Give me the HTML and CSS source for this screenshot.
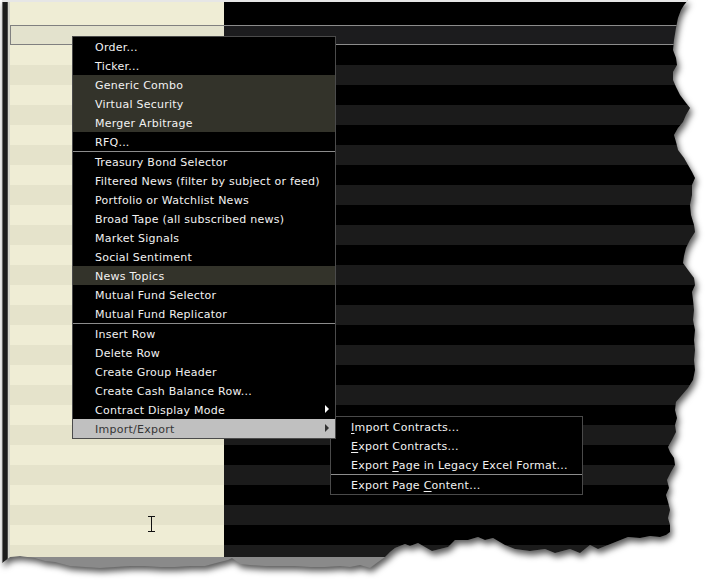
FILE: index.html
```html
<!DOCTYPE html>
<html lang="en">
<head>
    <meta charset="UTF-8">
    <title>Page context menu</title>
    <link rel="stylesheet" href="styles.css">
</head>
<body>
    <div class="screen">
        <div class="paper">
            <div class="sheet">
                <div class="edge"></div>
                <div class="grid">
                    <div class="row row-top"><div class="c1"></div><div class="c2"></div></div>
                    <div class="row row-sel"><div class="c1"></div><div class="c2"></div></div>
                    <div class="row rows"><div class="c1"></div><div class="c2"></div></div>
                </div>
            </div>
        </div>

        <div class="menu">
            <div class="item">Order...</div>
            <div class="item">Ticker...</div>
            <div class="item hl">Generic Combo</div>
            <div class="item hl">Virtual Security</div>
            <div class="item hl">Merger Arbitrage</div>
            <div class="item">RFQ...</div>
            <div class="sep"></div>
            <div class="item">Treasury Bond Selector</div>
            <div class="item">Filtered News (filter by subject or feed)</div>
            <div class="item">Portfolio or Watchlist News</div>
            <div class="item">Broad Tape (all subscribed news)</div>
            <div class="item">Market Signals</div>
            <div class="item">Social Sentiment</div>
            <div class="item hl">News Topics</div>
            <div class="item">Mutual Fund Selector</div>
            <div class="item">Mutual Fund Replicator</div>
            <div class="sep"></div>
            <div class="item">Insert Row</div>
            <div class="item">Delete Row</div>
            <div class="item">Create Group Header</div>
            <div class="item">Create Cash Balance Row...</div>
            <div class="item has-sub">Contract Display Mode</div>
            <div class="item has-sub active">Import/Export</div>
        </div>

        <div class="submenu">
            <div class="item"><u>I</u>mport Contracts...</div>
            <div class="item"><u>E</u>xport Contracts...</div>
            <div class="item">Export <u>P</u>age in Legacy Excel Format...</div>
            <div class="sep"></div>
            <div class="item">Export Page <u>C</u>ontent...</div>
        </div>

        <svg class="cursor" width="8" height="16" viewBox="0 0 8 16">
            <path d="M0 0.5h7M3.5 0v16M0 15.5h7" stroke="#111" stroke-width="1" fill="none"/>
        </svg>
    </div>
</body>
</html>
```

FILE: styles.css
```css
* {
    box-sizing: border-box;
    margin: 0;
    padding: 0;
}

body {
    background: #fff;
    font-family: "DejaVu Sans", Verdana, sans-serif;
    font-size: 11px;
    overflow: hidden;
}

.screen {
    position: relative;
    width: 712px;
    height: 585px;
}

/* torn screenshot paper */
.paper {
    width: 712px;
    height: 585px;
    filter: drop-shadow(2px 4px 3px rgba(0, 0, 0, 0.65));
}

.sheet {
    display: flex;
    align-items: flex-start;
    width: 700px;
    height: 580px;
    padding-left: 2px;
    background: #8a8a8a;
    border-top: 2px solid #e6e6e6;
    clip-path: polygon(
        2px 0, 688px 0, 684px 5px, 681px 10px, 678px 18px, 676px 28px, 674px 40px, 673px 50px,
        676px 58px, 677px 65px, 673px 72px, 673px 80px, 676px 87px, 680px 95px, 686px 103px,
        690px 108px, 686px 115px, 683px 122px, 678px 128px, 674px 135px, 676px 142px, 678px 150px,
        684px 158px, 688px 165px, 692px 172px, 695px 178px, 692px 185px, 692px 195px, 690px 205px,
        691px 215px, 694px 225px, 695px 232px, 690px 240px, 686px 248px, 684px 256px, 683px 263px,
        688px 270px, 694px 278px, 695px 285px, 692px 292px, 693px 300px, 694px 310px, 693px 320px,
        695px 330px, 694px 340px, 695px 350px, 694px 360px, 695px 370px, 693px 380px, 688px 388px,
        682px 395px, 676px 402px, 675px 410px, 677px 418px, 675px 425px, 676px 432px, 672px 440px,
        668px 447px, 670px 452px, 674px 458px, 675px 465px, 671px 472px, 667px 480px, 669px 488px,
        666px 495px, 668px 502px, 670px 510px, 668px 518px, 670px 525px, 670px 532px, 666px 535px,
        660px 537px, 650px 536px, 640px 538px, 628px 537px, 618px 541px, 608px 545px, 598px 549px,
        590px 545px, 580px 553px, 570px 549px, 555px 553px, 545px 549px, 530px 551px, 515px 549px,
        505px 545px, 493px 538px, 485px 540px, 478px 537px, 468px 540px, 455px 540px, 448px 547px,
        440px 549px, 432px 551px, 425px 547px, 418px 543px, 410px 546px, 405px 544px, 395px 548px,
        390px 552px, 385px 557px, 378px 562px, 370px 568px, 360px 565px, 350px 567px, 340px 566px,
        325px 567px, 310px 567px, 295px 566px, 280px 566px, 265px 566px, 250px 565px, 240px 564px,
        232px 558px, 228px 560px, 220px 562px, 205px 566px, 190px 566px, 175px 567px, 160px 567px,
        145px 566px, 130px 566px, 115px 567px, 100px 568px, 85px 567px, 70px 566px, 55px 562px,
        45px 561px, 35px 558px, 20px 556px, 10px 557px, 2px 563px
    );
}

.edge {
    width: 8px;
    height: 561px;
    background: linear-gradient(to right, #6a6a6a 0 1px, #1c1c1c 1px 5px, #4a4a4a 5px 6px, #d6d6cc 6px 8px);
}

.grid {
    display: flex;
    flex-direction: column;
    width: 690px;
    height: 555px;
}

.row {
    display: flex;
}

.c1 {
    width: 214px;
}

.c2 {
    flex: 1;
}

.row-top {
    height: 23px;
}

.row-top .c1 {
    background: #efedd5;
}

.row-top .c2 {
    background: #000;
}

.row-sel {
    height: 20px;
}

.row-sel .c1 {
    background: #e3e2cd;
    border: 1px solid #808080;
    border-right: none;
}

.row-sel .c2 {
    background: #1c1c1e;
    border-top: 1px solid #8c8c8c;
    border-bottom: 1px solid #8c8c8c;
}

.rows {
    flex: 1;
}

.rows .c1 {
    background: repeating-linear-gradient(to bottom, #efedd5 0 20px, #e5e3cb 20px 40px);
}

.rows .c2 {
    background: repeating-linear-gradient(to bottom, #000 0 20px, #1b1b1b 20px 40px);
}

/* context menus */
.menu,
.submenu {
    position: absolute;
    background: #000;
    color: #f2f2f2;
    letter-spacing: 0.25px;
}

.menu {
    left: 72px;
    top: 36px;
    width: 264px;
    border: 1px solid #4b4b4b;
    z-index: 2;
}

.submenu {
    left: 330px;
    top: 416px;
    width: 253px;
    border: 1px solid #4a4a4a;
    z-index: 1;
}

.item {
    position: relative;
    height: 19px;
    padding-top: 2px;
    line-height: 17px;
    padding-left: 22px;
    white-space: nowrap;
}

.submenu .item {
    padding-left: 20px;
}

.item u {
    text-decoration-thickness: 1px;
    text-underline-offset: 2px;
}

.sep {
    height: 1px;
    background: #8c8c8c;
}

.hl {
    background: #33332a;
}

.active {
    background: #c0c0c0;
    color: #363636;
}

.has-sub::after {
    content: "";
    position: absolute;
    right: 6px;
    top: 5px;
    border-left: 4px solid #fff;
    border-top: 4px solid transparent;
    border-bottom: 4px solid transparent;
}

.active::after {
    border-left-color: #333;
}

.cursor {
    position: absolute;
    left: 148px;
    top: 516px;
}
```
